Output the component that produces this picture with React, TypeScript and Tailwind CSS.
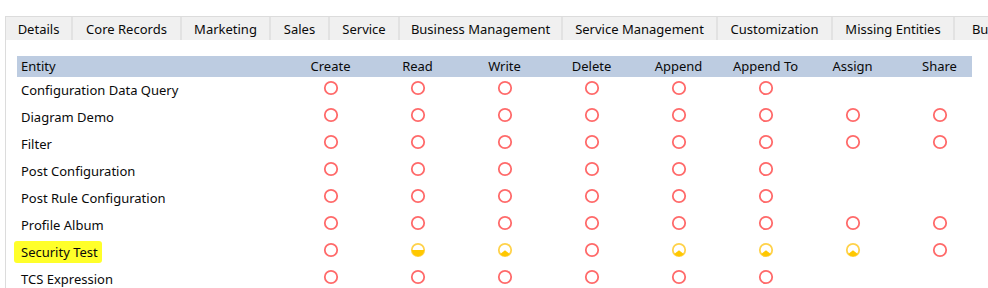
import React from "react";

type Lvl = "none" | "user" | "bu" | "";

const tabs: { label: string; w: number }[] = [
  { label: "Details", w: 67 },
  { label: "Core Records", w: 109 },
  { label: "Marketing", w: 89 },
  { label: "Sales", w: 59 },
  { label: "Service", w: 70 },
  { label: "Business Management", w: 163 },
  { label: "Service Management", w: 155 },
  { label: "Customization", w: 115 },
  { label: "Missing Entities", w: 122 },
  { label: "Business Process", w: 140 },
];

const cols = ["Create", "Read", "Write", "Delete", "Append", "Append To", "Assign", "Share"];

const N: Lvl = "none";
const rows: { name: string; cells: Lvl[]; hl?: boolean }[] = [
  { name: "Configuration Data Query", cells: [N, N, N, N, N, N, "", ""] },
  { name: "Diagram Demo", cells: [N, N, N, N, N, N, N, N] },
  { name: "Filter", cells: [N, N, N, N, N, N, N, N] },
  { name: "Post Configuration", cells: [N, N, N, N, N, N, "", ""] },
  { name: "Post Rule Configuration", cells: [N, N, N, N, N, N, "", ""] },
  { name: "Profile Album", cells: [N, N, N, N, N, N, N, N] },
  { name: "Security Test", cells: [N, "bu", "user", N, "user", "user", "user", N], hl: true },
  { name: "TCS Expression", cells: [N, N, N, N, N, N, "", ""] },
];

function Icon({ lvl }: { lvl: Lvl }) {
  if (!lvl) return null;
  if (lvl === "none") {
    return (
      <svg width="16" height="16" viewBox="0 0 16 16" className="mb-[6px]">
        <circle cx="8" cy="8" r="6.2" fill="none" stroke="#ff6a6a" strokeWidth="1.8" />
      </svg>
    );
  }
  if (lvl === "bu") {
    return (
      <svg width="16" height="16" viewBox="0 0 16 16" className="mb-[6px]">
        <circle cx="8" cy="8" r="6.2" fill="none" stroke="#ffd24a" strokeWidth="1.8" />
        <path d="M1.8 8 A6.2 6.2 0 0 0 14.2 8 Z" fill="#ffc800" />
      </svg>
    );
  }
  return (
    <svg width="16" height="16" viewBox="0 0 16 16" className="mb-[6px]">
      <circle cx="8" cy="8" r="6.2" fill="none" stroke="#ffd24a" strokeWidth="1.8" />
      <path d="M8 8.2 L3.2 12 A6.2 6.2 0 0 0 12.8 12 Z" fill="#ffc800" />
    </svg>
  );
}

export default function App() {
  return (
    <div
      className="w-[988px] h-[288px] overflow-hidden bg-white text-[#0a0a0a] text-[13px]"
      style={{ fontFamily: '"Noto Sans", "Open Sans", sans-serif' }}
    >
      <div className="pt-4 pl-[5px]">
        <div className="border-l border-t border-[#dcdcdc] h-[272px]">
          <div className="flex h-[23px] bg-[#f0f0f0] overflow-hidden whitespace-nowrap">
            {tabs.map((t, i) => (
              <div
                key={i}
                className="shrink-0 flex items-center justify-center border-r-2 border-[#e2e2e2] leading-none pt-[2px]"
                style={{ width: t.w }}
              >
                {t.label}
              </div>
            ))}
          </div>
          <div className="pt-4 pl-[11px]">
            <div className="w-[955px] h-[21px] bg-[#bdcce1] overflow-visible">
              <div className="grid grid-cols-[270px_repeat(8,87px)] h-full items-center">
                <div className="pl-[4px]">Entity</div>
                {cols.map((c) => (
                  <div key={c} className="text-center">
                    {c}
                  </div>
                ))}
              </div>
            </div>
            {rows.map((r) => (
              <div key={r.name} className="grid grid-cols-[270px_repeat(8,87px)] h-[27px] items-center">
                <div className="pl-[4px] whitespace-nowrap">
                  {r.hl ? (
                    <span className="bg-[#ffff2a] -ml-[7px] pl-[7px] pr-[4px] py-[2px] rounded-[3px]">{r.name}</span>
                  ) : (
                    r.name
                  )}
                </div>
                {r.cells.map((c, i) => (
                  <div key={i} className="flex justify-center items-center">
                    <Icon lvl={c} />
                  </div>
                ))}
              </div>
            ))}
          </div>
        </div>
      </div>
    </div>
  );
}
